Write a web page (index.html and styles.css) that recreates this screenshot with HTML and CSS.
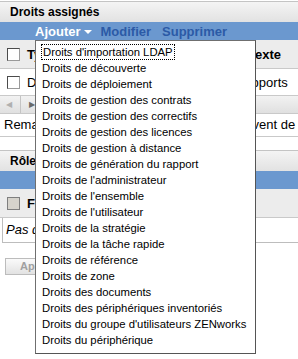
FILE: index.html
```html
<!DOCTYPE html>
<html lang="fr">
<head>
	<meta charset="UTF-8" />
	<title>Droits assignés</title>
	<link rel="stylesheet" href="styles.css">
</head>
<body>

	<div class="panel">
		<div class="panel__title">Droits assignés</div>
		<div class="panel__toolbar">
			<span class="panel__action panel__action--open">Ajouter</span>
			<span class="panel__caret"></span>
			<span class="panel__action panel__action--edit">Modifier</span>
			<span class="panel__action panel__action--delete">Supprimer</span>
		</div>
		<div class="grid">
			<div class="grid__row grid__row--head">
				<div class="grid__check"><span class="check"></span></div>
				<div class="grid__cell">Type</div>
				<div class="grid__cell grid__cell--text">Texte</div>
			</div>
			<div class="grid__row">
				<div class="grid__check"><span class="check"></span></div>
				<div class="grid__cell">Droits des rapports</div>
				<div class="grid__cell">Rapports</div>
			</div>
			<div class="grid__scroll">
				<span class="grid__arrow grid__arrow--left">&#9664;</span>
				<span class="grid__arrow grid__arrow--right">&#9654;</span>
			</div>
			<div class="grid__note">Remarque : les droits de cette zone ne peuvent de ce fait pas être hérités.</div>
		</div>
	</div>

	<div class="panel panel--roles">
		<div class="panel__title">Rôles</div>
		<div class="panel__toolbar"></div>
		<div class="grid">
			<div class="grid__row grid__row--head">
				<div class="grid__check"><span class="check check--disabled"></span></div>
				<div class="grid__cell">Fonction</div>
				<div class="grid__cell"></div>
			</div>
			<div class="grid__empty">Pas d'éléments à afficher</div>
		</div>
	</div>

	<div class="actions">
		<button class="actions__apply" disabled>Appliquer</button>
	</div>

	<ul class="menu">
		<li class="menu__item"><span class="menu__focus">Droits d'importation LDAP</span></li>
		<li class="menu__item">Droits de découverte</li>
		<li class="menu__item">Droits de déploiement</li>
		<li class="menu__item">Droits de gestion des contrats</li>
		<li class="menu__item">Droits de gestion des correctifs</li>
		<li class="menu__item">Droits de gestion des licences</li>
		<li class="menu__item">Droits de gestion à distance</li>
		<li class="menu__item">Droits de génération du rapport</li>
		<li class="menu__item">Droits de l'administrateur</li>
		<li class="menu__item">Droits de l'ensemble</li>
		<li class="menu__item">Droits de l'utilisateur</li>
		<li class="menu__item">Droits de la stratégie</li>
		<li class="menu__item">Droits de la tâche rapide</li>
		<li class="menu__item">Droits de référence</li>
		<li class="menu__item">Droits de zone</li>
		<li class="menu__item">Droits des documents</li>
		<li class="menu__item">Droits des périphériques inventoriés</li>
		<li class="menu__item">Droits du groupe d'utilisateurs ZENworks</li>
		<li class="menu__item">Droits du périphérique</li>
	</ul>

</body>
</html>
```

FILE: styles.css
```css
* {
	box-sizing: border-box;
}

html {
	margin: 0px;
	padding: 0px;
}

body {
	margin: 0px;
	padding: 0px;
	width: 298px;
	height: 359px;
	overflow: hidden;
	position: relative;
	background-color: #ffffff;
	color: #000000;
	font-family: "Liberation Sans", Arial, sans-serif;
	font-size: 13px;
}

.panel {
	overflow: hidden;
}

.panel--roles {
	margin-top: 12px;
}

.panel__title {
	margin-top: 1px;
	height: 21px;
	border-top: 1px solid #c4c4c4;
	background: linear-gradient(#f4f4f4, #e2e2e2);
	padding-left: 10px;
	font-size: 12px;
	font-weight: bold;
	line-height: 20px;
	white-space: nowrap;
}

.panel__toolbar {
	display: flex;
	align-items: center;
	height: 18px;
	padding-left: 35px;
	background-color: #6b98cf;
	font-weight: bold;
	white-space: nowrap;
}

.panel__action--open {
	color: #ffffff;
}

.panel__action--edit,
.panel__action--delete {
	color: #2b5aa6;
}

.panel__action--edit {
	margin-left: 9px;
}

.panel__action--delete {
	margin-left: 11px;
}

.panel__caret {
	margin-left: 3px;
	margin-top: 2px;
	border-left: 4px solid transparent;
	border-right: 4px solid transparent;
	border-top: 4px solid #ffffff;
}

.grid__row {
	display: grid;
	grid-template-columns: 22px 208px 1fr;
	height: 27px;
	border-bottom: 1px solid #c9c9c9;
	align-items: center;
	white-space: nowrap;
}

.grid__row--head {
	height: 29px;
	background-color: #ececec;
	font-weight: bold;
}

.grid__check {
	padding-left: 7px;
	display: flex;
	align-items: center;
}

.grid__cell {
	padding-left: 5px;
	overflow: hidden;
}

.grid__cell--text {
	padding-left: 18px;
}

.check {
	display: block;
	width: 13px;
	height: 13px;
	border: 1px solid #4b4b4b;
	border-right-color: #9a9a9a;
	border-bottom-color: #9a9a9a;
	background-color: #ffffff;
}

.check--disabled {
	background-color: #d6d3cc;
	border-color: #7f7f7f;
}

.grid__scroll {
	display: flex;
	align-items: center;
	height: 18px;
	background: linear-gradient(#f2f2f2, #e0e0e0);
	border-bottom: 1px solid #c9c9c9;
	font-size: 8px;
}

.grid__arrow {
	display: block;
	width: 21px;
	padding-left: 6px;
	line-height: 17px;
}

.grid__arrow--left {
	color: #b0b0b0;
	border-right: 1px solid #c4c4c4;
}

.grid__arrow--right {
	color: #6a6a6a;
	padding-left: 8px;
}

.grid__note {
	height: 23px;
	padding-left: 4px;
	line-height: 22px;
	border-bottom: 1px solid #c9c9c9;
	white-space: nowrap;
}

.grid__empty {
	height: 25px;
	margin-left: 2px;
	padding-left: 3px;
	border-left: 1px solid #bdbdbd;
	border-bottom: 1px solid #bdbdbd;
	font-style: italic;
	line-height: 24px;
	white-space: nowrap;
}

.actions {
	margin-top: 15px;
	padding-left: 5px;
}

.actions__apply {
	height: 17px;
	padding: 0px 14px;
	border: 1px solid #bcbcbc;
	background: linear-gradient(#fafafa, #e2e2e2);
	color: #a0a0a0;
	font-family: "Liberation Sans", Arial, sans-serif;
	font-size: 11px;
	font-weight: bold;
	line-height: 15px;
}

.menu {
	position: absolute;
	left: 35px;
	top: 40px;
	width: 221px;
	height: 314px;
	margin: 0px;
	padding: 3px 0px 0px 0px;
	list-style: none;
	background-color: #ffffff;
	border: 1px solid #6f6f6f;
	border-right-color: #555555;
	border-bottom-color: #555555;
	font-size: 11.3px;
}

.menu__item {
	height: 16px;
	padding-left: 6px;
	line-height: 16px;
	white-space: nowrap;
}

.menu__focus {
	padding: 1px 1px;
	outline: 1px dotted #000000;
}
```
